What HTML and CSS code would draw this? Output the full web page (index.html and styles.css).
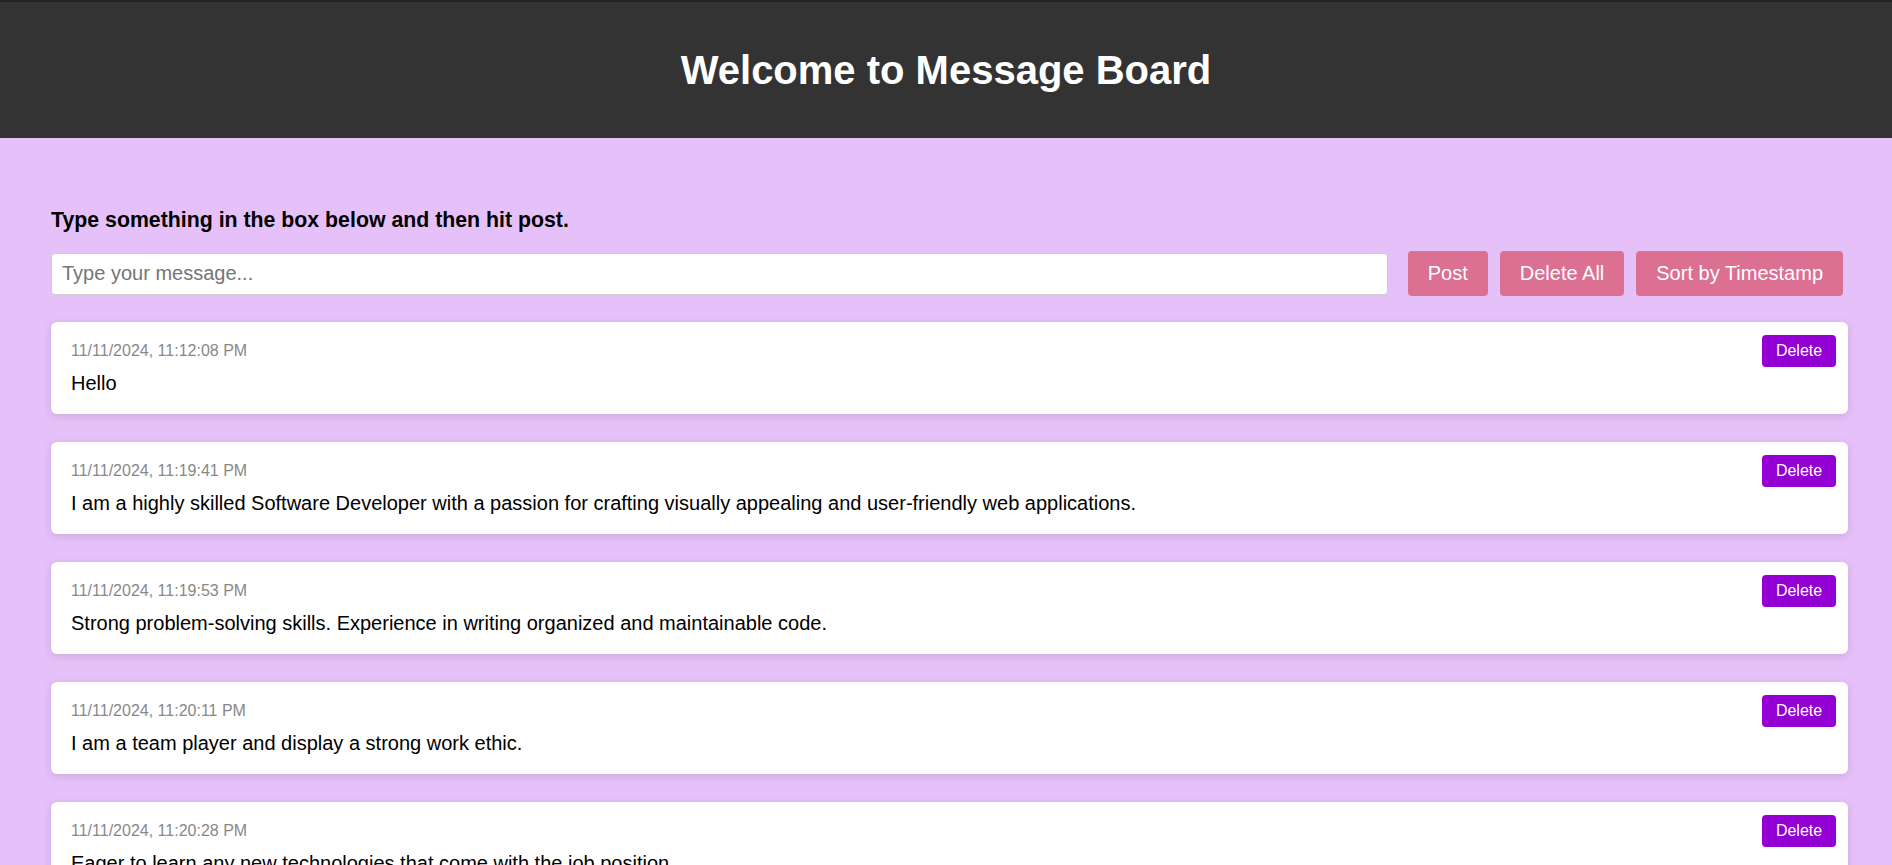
FILE: index.html
```html
<!DOCTYPE html>
<html lang="en">
<head>
<meta charset="utf-8">
<title>Message Board</title>
<link rel="stylesheet" href="styles.css">
</head>
<body>
<header class="site-header">
  <h1 class="site-title">Welcome to Message Board</h1>
</header>
<main class="board">
  <p class="instructions">Type something in the box below and then hit post.</p>
  <div class="composer">
    <input class="composer-input" type="text" placeholder="Type your message...">
    <button class="action-btn">Post</button>
    <button class="action-btn">Delete All</button>
    <button class="action-btn">Sort by Timestamp</button>
  </div>
  <ul class="message-list">
    <li class="message">
      <div class="message-time">11/11/2024, 11:12:08 PM</div>
      <div class="message-text">Hello</div>
      <button class="delete-btn">Delete</button>
    </li>
    <li class="message">
      <div class="message-time">11/11/2024, 11:19:41 PM</div>
      <div class="message-text">I am a highly skilled Software Developer with a passion for crafting visually appealing and user-friendly web applications.</div>
      <button class="delete-btn">Delete</button>
    </li>
    <li class="message">
      <div class="message-time">11/11/2024, 11:19:53 PM</div>
      <div class="message-text">Strong problem-solving skills. Experience in writing organized and maintainable code.</div>
      <button class="delete-btn">Delete</button>
    </li>
    <li class="message">
      <div class="message-time">11/11/2024, 11:20:11 PM</div>
      <div class="message-text">I am a team player and display a strong work ethic.</div>
      <button class="delete-btn">Delete</button>
    </li>
    <li class="message">
      <div class="message-time">11/11/2024, 11:20:28 PM</div>
      <div class="message-text">Eager to learn any new technologies that come with the job position.</div>
      <button class="delete-btn">Delete</button>
    </li>
  </ul>
</main>
</body>
</html>
```

FILE: styles.css
```css
* {
  box-sizing: border-box;
}

html, body {
  margin: 0;
  padding: 0;
}

body {
  background: #e6c1f9;
  font-family: "Liberation Sans", Arial, sans-serif;
  color: #000;
}

.site-header {
  background: #333333;
  border-top: 2px solid #222222;
  height: 138px;
  display: flex;
  align-items: center;
  justify-content: center;
}

.site-title {
  margin: 0;
  color: #ffffff;
  font-size: 40px;
  font-weight: bold;
  line-height: 46px;
}

.board {
  width: 1797px;
  margin-left: 51px;
  padding-top: 70px;
}

.instructions {
  margin: 0 0 19px;
  font-size: 21.3px;
  font-weight: bold;
  line-height: 24px;
}

.composer {
  display: flex;
  align-items: center;
  gap: 12px;
  padding-right: 5px;
  margin-bottom: 26px;
}

.composer-input {
  flex: 1;
  height: 42px;
  margin-right: 8px;
  padding: 0 10px;
  border: 1px solid #cccccc;
  border-radius: 4px;
  background: #ffffff;
  font-family: "Liberation Sans", Arial, sans-serif;
  font-size: 20px;
  color: #000;
}

.composer-input::placeholder {
  color: #757575;
}

.action-btn {
  height: 45px;
  padding: 0 20px;
  border: none;
  border-radius: 4px;
  background: #db7093;
  color: #ffffff;
  font-family: "Liberation Sans", Arial, sans-serif;
  font-size: 20px;
}

.message-list {
  list-style: none;
  margin: 0;
  padding: 0;
  display: flex;
  flex-direction: column;
  gap: 28px;
}

.message {
  position: relative;
  background: #ffffff;
  border-radius: 6px;
  box-shadow: 0 2px 8px rgba(0, 0, 0, 0.12);
  padding: 20px 20px 19px;
  min-height: 92px;
}

.message-time {
  font-size: 16px;
  line-height: 18px;
  color: #888888;
  margin-bottom: 12px;
}

.message-text {
  font-size: 20px;
  line-height: 23px;
}

.delete-btn {
  position: absolute;
  top: 13px;
  right: 12px;
  width: 74px;
  height: 32px;
  border: none;
  border-radius: 4px;
  background: #9400d3;
  color: #ffffff;
  font-family: "Liberation Sans", Arial, sans-serif;
  font-size: 16px;
}
```
